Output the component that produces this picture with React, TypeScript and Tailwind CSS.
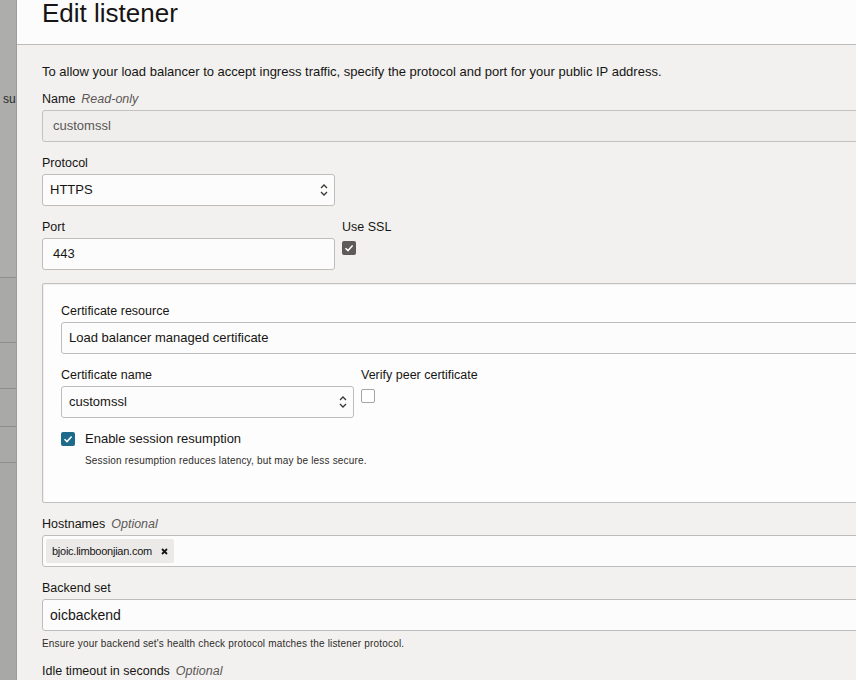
import React from "react";

const font = { fontFamily: '"Liberation Sans", Arial, sans-serif' };

function Chevrons() {
  return (
    <svg width="8" height="14" viewBox="0 0 8 14" className="shrink-0">
      <path d="M1 5 L4 2 L7 5" fill="none" stroke="#3a3632" strokeWidth="1.3" />
      <path d="M1 9 L4 12 L7 9" fill="none" stroke="#3a3632" strokeWidth="1.3" />
    </svg>
  );
}

function Check() {
  return (
    <svg width="10" height="10" viewBox="0 0 10 10">
      <path d="M1.5 5.2 L4 7.6 L8.6 2.6" fill="none" stroke="#fff" strokeWidth="1.5" />
    </svg>
  );
}

function Label({ text, hint }: { text: string; hint?: string }) {
  return (
    <div className="h-[16px] text-[12.5px] leading-[16px] text-[#161513] mb-[3px] whitespace-nowrap">
      {text}
      {hint && <span className="ml-[6px] italic text-[#5c5855]">{hint}</span>}
    </div>
  );
}

function Select({ value }: { value: string }) {
  return (
    <div className="w-[293px] h-[32px] flex items-center justify-between pl-[7px] pr-[6px] bg-[#fcfcfc] border border-[#bfbdbb] rounded-[3px] text-[13px] text-[#161513]">
      <span>{value}</span>
      <Chevrons />
    </div>
  );
}

function Help({ text }: { text: string }) {
  return <div className="text-[10px] leading-[13px] tracking-[0.18px] text-[#2f2c2a] whitespace-nowrap">{text}</div>;
}

export default function App() {
  return (
    <div className="w-[856px] h-[680px] overflow-hidden flex" style={font}>
      {/* background page strip */}
      <div className="w-[17px] shrink-0 flex flex-col bg-[#adadac] border-r border-[#9c9c9c]">
        <div className="h-[278px] border-b border-[#8e8e8e] pt-[90px] pl-[3px] text-[12px] text-[#2a2a2a] overflow-hidden">su</div>
        <div className="h-[65px] border-b border-[#8e8e8e] bg-[#a9a9a8]" />
        <div className="h-[46px] border-b border-[#8e8e8e] bg-[#a9a9a8]" />
        <div className="h-[38px] border-b border-[#8e8e8e] bg-[#a9a9a8]" />
        <div className="h-[36px] border-b border-[#8e8e8e] bg-[#a9a9a8]" />
        <div className="flex-1 bg-[#a8a8a7]" />
      </div>

      {/* panel */}
      <div className="flex-1 min-w-0 flex flex-col bg-[#f2f1ef]">
        <div className="h-[45px] shrink-0 bg-[#fcfcfc] border-b border-[#bdbcbb] pl-[25px] overflow-hidden">
          <h1 className="text-[26px] leading-[26px] text-[#161513] whitespace-nowrap">Edit listener</h1>
        </div>

        <div className="w-[900px] pl-[25px] pt-[19px] text-[#161513]">
          <p className="text-[13px] leading-[16px] mb-[11px] whitespace-nowrap">
            To allow your load balancer to accept ingress traffic, specify the protocol and port for your public IP address.
          </p>

          <Label text="Name" hint="Read-only" />
          <div className="h-[32px] flex items-center pl-[10px] bg-[#efeeec] border border-[#c4c2c0] rounded-[3px] text-[13px] text-[#5a5654] mb-[13px]">
            customssl
          </div>

          <Label text="Protocol" />
          <div className="mb-[13px]">
            <Select value="HTTPS" />
          </div>

          <div className="flex gap-[7px] mb-[13px]">
            <div>
              <Label text="Port" />
              <div className="w-[293px] h-[32px] flex items-center pl-[10px] bg-[#fcfcfc] border border-[#bfbdbb] rounded-[3px] text-[13px]">
                443
              </div>
            </div>
            <div>
              <Label text="Use SSL" />
              <div className="mt-[6px] w-[14px] h-[14px] rounded-[2px] bg-[#5d5a58] flex items-center justify-center">
                <Check />
              </div>
            </div>
          </div>

          {/* certificate card */}
          <div className="h-[220px] bg-[#fdfdfd] border border-[#c2c0be] rounded-[2px] shadow-[inset_1px_1px_1px_rgba(0,0,0,0.06)] pl-[18px] pt-[19px] mb-[13px]">
            <Label text="Certificate resource" />
            <div className="h-[32px] flex items-center pl-[7px] bg-[#fcfcfc] border border-[#bfbdbb] rounded-[3px] text-[13px] mb-[13px]">
              Load balancer managed certificate
            </div>

            <div className="flex gap-[7px] mb-[13px]">
              <div>
                <Label text="Certificate name" />
                <Select value="customssl" />
              </div>
              <div>
                <Label text="Verify peer certificate" />
                <div className="mt-[6px] w-[14px] h-[14px] rounded-[2px] bg-white border border-[#a7a5a3]" />
              </div>
            </div>

            <div className="flex items-center gap-[10px] h-[16px]">
              <div className="w-[14px] h-[14px] rounded-[2px] bg-[#1d6a8b] flex items-center justify-center">
                <Check />
              </div>
              <span className="text-[13px] leading-[16px]">Enable session resumption</span>
            </div>
            <div className="pl-[24px] mt-[7px]">
              <Help text="Session resumption reduces latency, but may be less secure." />
            </div>
          </div>

          <Label text="Hostnames" hint="Optional" />
          <div className="h-[32px] flex items-center pl-[3px] bg-[#fcfcfc] border border-[#bfbdbb] rounded-[3px] mb-[13px]">
            <div className="h-[24px] flex items-center gap-[9px] pl-[6px] pr-[6px] bg-[#ebeae9] rounded-[2px] text-[11px] tracking-[-0.25px] text-[#161513]">
              <span>bjoic.limboonjian.com</span>
              <svg width="7" height="7" viewBox="0 0 7 7">
                <path d="M1 1 L6 6 M6 1 L1 6" stroke="#161513" strokeWidth="1.8" />
              </svg>
            </div>
          </div>

          <Label text="Backend set" />
          <div className="h-[32px] flex items-center pl-[7px] bg-[#fcfcfc] border border-[#bfbdbb] rounded-[3px] text-[14px] mb-[6px]">
            oicbackend
          </div>
          <Help text="Ensure your backend set's health check protocol matches the listener protocol." />

          <div className="mt-[13px]">
            <Label text="Idle timeout in seconds" hint="Optional" />
          </div>
        </div>
      </div>
    </div>
  );
}
